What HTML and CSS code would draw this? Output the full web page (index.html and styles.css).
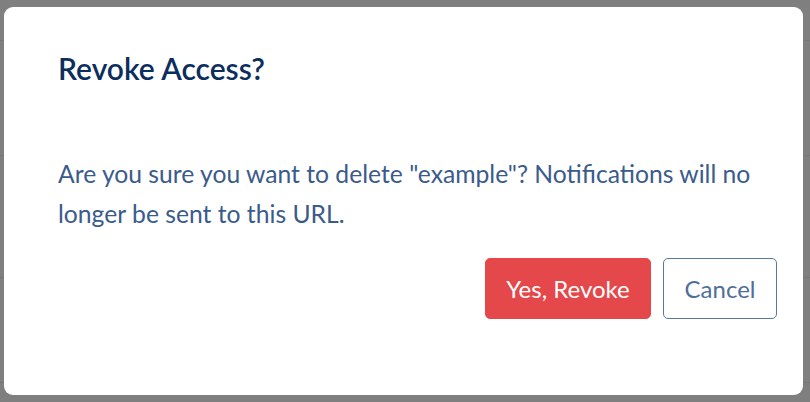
FILE: index.html
```html
<!DOCTYPE html>
<html lang="en">
  <head>
    <meta charset="UTF-8" />
    <meta name="viewport" content="width=device-width, initial-scale=1.0" />
    <title>Revoke Access</title>
    <link rel="stylesheet" href="styles.css">
  </head>
  <body>
    <div class="page">
      <div class="page-row"></div>
      <div class="page-row tall"></div>
      <div class="page-row mid"></div>
      <div class="page-row last"></div>
    </div>

    <div class="backdrop">
      <div class="modal">
        <h2 class="modal-title">Revoke Access?</h2>
        <p class="modal-body">Are you sure you want to delete "example"? Notifications will no longer be sent to this URL.</p>
        <div class="modal-actions">
          <button class="btn btn-danger">Yes, Revoke</button>
          <button class="btn btn-outline">Cancel</button>
        </div>
      </div>
    </div>
  </body>
</html>
```

FILE: styles.css
```css
body {
  font-family: Lato, 'Noto Sans', sans-serif;
  margin: 0;
  background: #ffffff;
  overflow: hidden;
}

.page-row {
  height: 40px;
  border-bottom: 1px solid #eeeeee;
}

.page-row.tall {
  height: 114px;
}

.page-row.mid {
  height: 121px;
}

.page-row.last {
  height: 104px;
}

.backdrop {
  position: fixed;
  inset: 0;
  background: rgba(0, 0, 0, 0.5);
}

.modal {
  position: absolute;
  top: 7px;
  left: 4px;
  width: 799px;
  height: 388px;
  box-sizing: border-box;
  background: #ffffff;
  border-radius: 9px;
  padding: 43px 26px 0 54px;
}

.modal-title {
  margin: 0;
  font-size: 30px;
  line-height: 36px;
  font-weight: 600;
  color: #0b2e5e;
}

.modal-body {
  margin: 68px 0 0 0;
  font-size: 24.7px;
  line-height: 40px;
  color: #3a5b8b;
}

.modal-actions {
  display: flex;
  justify-content: flex-end;
  gap: 12px;
  margin-top: 24px;
}

.btn {
  font-family: inherit;
  font-size: 24px;
  height: 61px;
  border-radius: 5px;
  cursor: pointer;
}

.btn-danger {
  width: 166px;
  background: #e5484a;
  border: 1px solid #e5484a;
  color: #ffffff;
}

.btn-outline {
  width: 114px;
  background: #ffffff;
  border: 1px solid #5a77a0;
  color: #4f6f99;
}
```
